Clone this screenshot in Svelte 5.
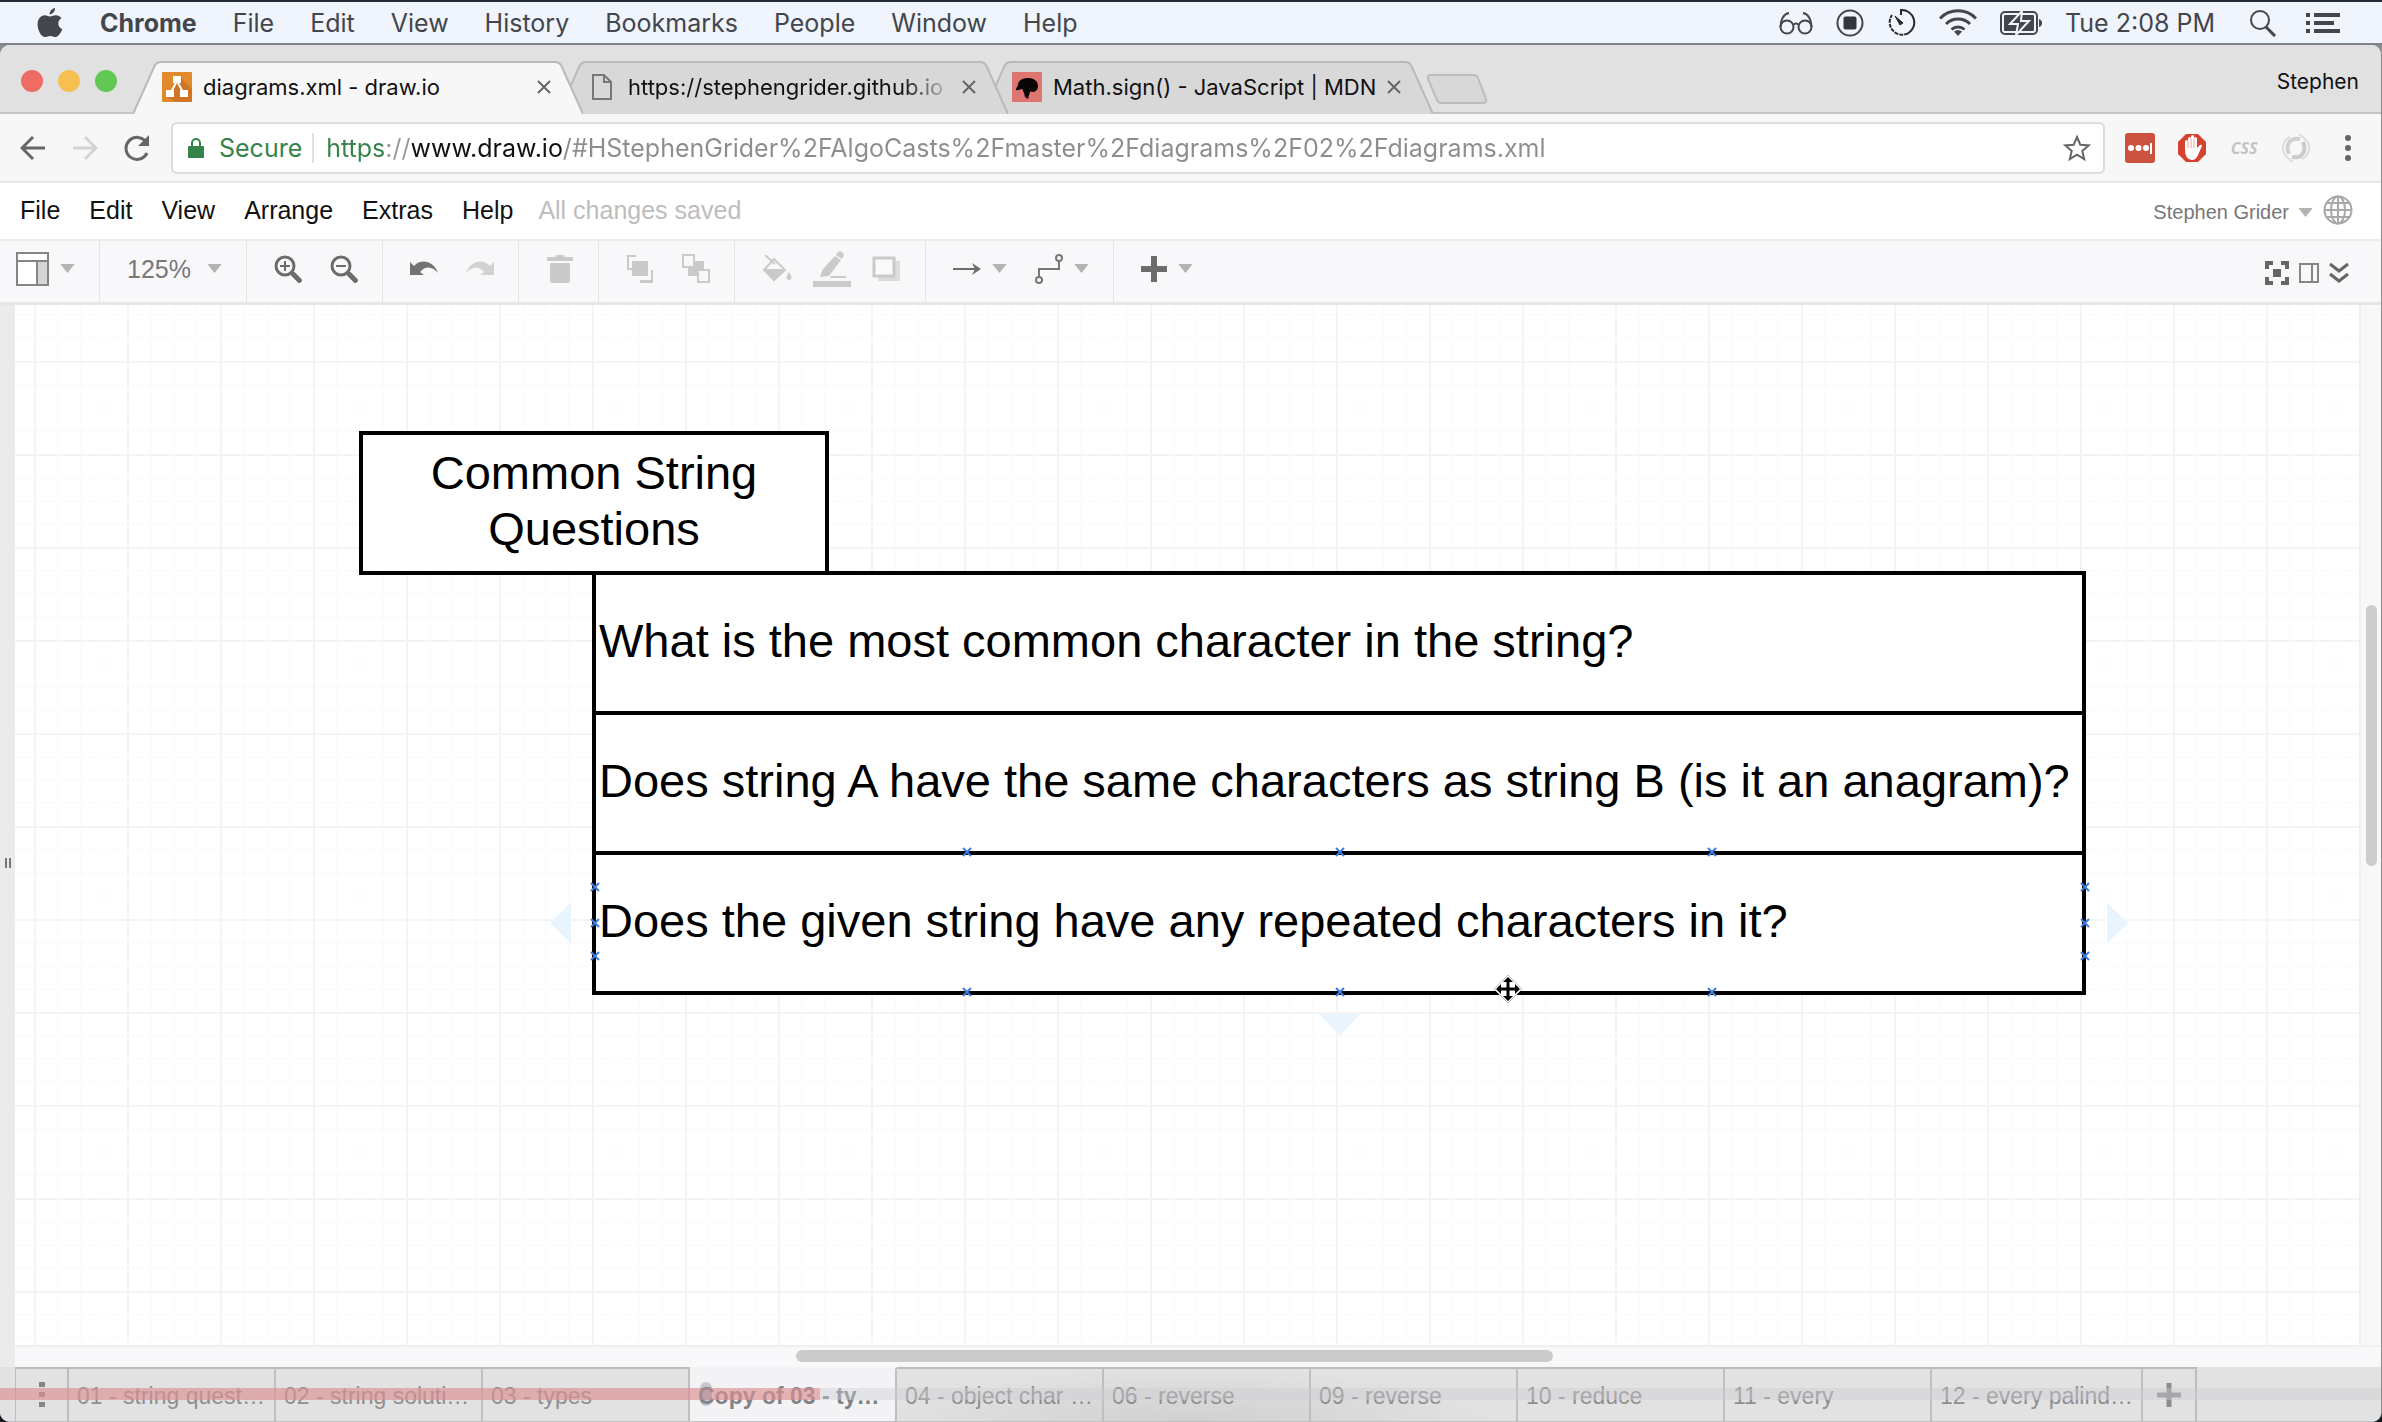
<script>
  const systemMenus = ['File', 'Edit', 'View', 'History', 'Bookmarks', 'People', 'Window', 'Help'];
  const appMenus = ['File', 'Edit', 'View', 'Arrange', 'Extras', 'Help'];
  const pages = [
    '01 - string quest…',
    '02 - string soluti…',
    '03 - types',
    'Copy of 03 - ty…',
    '04 - object char …',
    '06 - reverse',
    '09 - reverse',
    '10 - reduce',
    '11 - every',
    '12 - every palind…'
  ];
  const questions = [
    'What is the most common character in the string?',
    'Does string A have the same characters as string B (is it an anagram)?',
    'Does the given string have any repeated characters in it?'
  ];
  const anchors = [
    [952, 547], [1325, 547], [1697, 547],
    [952, 687], [1325, 687], [1697, 687],
    [580, 582], [580, 618], [580, 651],
    [2070, 582], [2070, 618], [2070, 651]
  ];
  let activePage = $state(3);
  let zoom = $state('125%');
  let address = $state('https://www.draw.io/#HStephenGrider%2FAlgoCasts%2Fmaster%2Fdiagrams%2F02%2Fdiagrams.xml');
</script>

{#snippet caret()}
  <svg class="caret" viewBox="0 0 16 10" aria-hidden="true"><path d="M0 0h16L8 10z" fill="#b3b3b3" /></svg>
{/snippet}

{#snippet tabShape(fill)}
  <svg class="tab-shape" viewBox="0 0 450 53" preserveAspectRatio="none" aria-hidden="true">
    <path d="M0 53 L22 4 Q24 1 28 1 H422 Q426 1 428 4 L450 53" {fill} stroke="#b9b9ba" stroke-width="2" />
  </svg>
{/snippet}

{#snippet close()}
  <button class="close" aria-label="Close tab">
    <svg width="14" height="14" viewBox="0 0 14 14"><path d="M1 1l12 12M13 1L1 13" stroke="#666" stroke-width="2" /></svg>
  </button>
{/snippet}

<div class="desktop">
  <header class="menubar">
    <svg width="26" height="30" viewBox="0 0 26 30" aria-label="Apple" role="img">
      <path fill="#43464c" d="M18 0c.3 3-2.300 6.300-5.300 6.500C12.300 3.500 15.200.6 18 0zM13 8.500c1.600 0 3-1.300 5.800-1.300 2.300 0 4.300 1.100 5.600 3-4.600 2.800-3.900 8.800.9 10.900-1.200 3.400-4 8-6.700 8-2 0-2.700-1.200-5.200-1.200s-3.300 1.200-5.200 1.200C4.300 29.100.6 22.400.6 16.500c0-5.700 3.300-9.300 7-9.300 2.500 0 3.900 1.300 5.400 1.300z" />
    </svg>
    <nav class="system-menus" aria-label="System">
      <button class="app-name">Chrome</button>
      {#each systemMenus as item}<button>{item}</button>{/each}
    </nav>
    <div class="status">
      <svg width="34" height="24" viewBox="0 0 34 24" fill="none" stroke="#43464c" stroke-width="2"><circle cx="8" cy="16" r="6.500" /><circle cx="26" cy="16" r="6.500" /><path d="M1.500 16C2 8 4 3 10 2M32.500 16C32 8 30 3 24 2M14 14q3-3 6 0" /></svg>
      <svg width="28" height="28" viewBox="0 0 28 28"><circle cx="14" cy="14" r="12.500" fill="none" stroke="#43464c" stroke-width="2" /><rect x="7.500" y="7.500" width="13" height="13" rx="2" fill="#33363c" /></svg>
      <svg width="29" height="29" viewBox="0 0 29 29" fill="none" stroke="#25282d" stroke-width="2"><path d="M14 7V2a12.500 12.500 0 0 1 7 23.300" /><path d="M21 25.300A12.500 12.500 0 0 1 5 7" stroke-dasharray="4 1" /><path d="M8 8l8 7-3 2z" fill="#25282d" stroke-width="1" /></svg>
      <svg width="38" height="28" viewBox="0 0 38 28" fill="none" stroke="#43464c" stroke-width="3"><path d="M1 9.500a25 25 0 0 1 36 0M7 15a17 17 0 0 1 24 0M12.500 20.500a9.500 9.500 0 0 1 13 0" /><path d="M19 27l-4-4.500q4-3 8 0z" fill="#43464c" stroke="none" /></svg>
      <svg width="42" height="24" viewBox="0 0 42 24"><rect x="1" y="1" width="36" height="22" rx="4" fill="none" stroke="#43464c" stroke-width="2" /><rect x="4" y="4" width="30" height="16" rx="1" fill="#43464c" /><path d="M39 8q3 1 3 4t-3 4z" fill="#43464c" /><path d="M22 0L10 13h8l-2 11 13-14h-8z" fill="#43464c" stroke="#f0f4fc" stroke-width="2" /></svg>
      <span>Tue 2:08 PM</span>
      <svg class="spotlight" width="28" height="28" viewBox="0 0 28 28" fill="none" stroke="#43464c"><circle cx="11" cy="11" r="9" stroke-width="2" /><path d="M17 18l9 9" stroke-width="3" /></svg>
      <svg width="34" height="20" viewBox="0 0 34 20" fill="#43464c"><path d="M0 0h4v4H0zM8 0h26v4H8zM0 8h4v4H0zM8 8h20v4H8zM0 16h4v4H0zM8 16h26v4H8z" /></svg>
    </div>
  </header>

  <div class="window">
    <div class="tab-strip">
      <div class="lights">
        <button class="light red" aria-label="Close window"></button>
        <button class="light yellow" aria-label="Minimize window"></button>
        <button class="light green" aria-label="Zoom window"></button>
      </div>
      <div class="tabs">
        <div class="tab current">
          {@render tabShape('#f7f7f8')}
          <svg width="30" height="30" viewBox="0 0 30 30"><rect width="30" height="30" rx="1" fill="#e08a2c" /><path d="M18 5l12 12v13H14L4 25z" fill="#cf7626" /><path d="M15 9l-7 13M15 9l7 13" stroke="#fff" stroke-width="2" /><path d="M11 4h8v7h-8zM4 18h8v7H4zM18 18h8v7h-8z" fill="#fff" /></svg>
          <span class="tab-title">diagrams.xml - draw.io</span>
          {@render close()}
        </div>
        <div class="tab second">
          {@render tabShape('#d8d8d9')}
          <svg width="20" height="26" viewBox="0 0 20 26" fill="none" stroke="#777" stroke-width="2"><path d="M1 1h11l7 7v17H1zM12 1v7h7" /></svg>
          <span class="tab-title faded">https://stephengrider.github.io</span>
          {@render close()}
        </div>
        <div class="tab">
          {@render tabShape('#d8d8d9')}
          <svg width="30" height="30" viewBox="0 0 30 30"><rect width="30" height="30" rx="1" fill="#de7571" /><path d="M4 18c0-3 2-3 2-6 1-4 5-6 10-6 6 0 10 3 10 8 0 3-2 6-5 6-1 0-2-1-3 0l-2 7-3-2-1-4c-1-2-1-3-2-4-2 0-4 2-6 1z" fill="#0a0606" /></svg>
          <span class="tab-title">Math.sign() - JavaScript | MDN</span>
          {@render close()}
        </div>
        <button class="new-tab" aria-label="New tab">
          <svg width="62" height="32" viewBox="0 0 62 32"><path d="M4 2h44q3 0 4 3l8 21q1 4-3 4H15q-3 0-4-3L2 6q-1-4 2-4z" fill="#d8d8d9" stroke="#bcbcbd" stroke-width="2" /></svg>
        </button>
      </div>
      <button class="profile">Stephen</button>
    </div>

    <div class="address-row">
      <div class="nav-buttons">
        <button aria-label="Back"><svg width="26" height="26" viewBox="0 0 26 26" fill="none" stroke="#666" stroke-width="3"><path d="M25 13H3M13 2L2 13l11 11" /></svg></button>
        <button aria-label="Forward"><svg width="26" height="26" viewBox="0 0 26 26" fill="none" stroke="#d4d4d5" stroke-width="3"><path d="M1 13h22M13 2l11 11-11 11" /></svg></button>
        <button aria-label="Reload"><svg width="26" height="26" viewBox="0 0 26 26"><path d="M23 18a11 11 0 1 1-1-11" fill="none" stroke="#666" stroke-width="3" /><path d="M25 0v11H14z" fill="#666" /></svg></button>
      </div>
      <div class="omnibox">
        <svg width="16" height="22" viewBox="0 0 16 22"><path d="M4 10V6a4 4 0 0 1 8 0v4" fill="none" stroke="#35834b" stroke-width="2" /><rect y="9" width="16" height="12" rx="1" fill="#35834b" /></svg>
        <span class="secure">Secure</span>
        <input class="url" type="text" aria-label="Address" bind:value={address} />
        <button aria-label="Bookmark"><svg width="28" height="28" viewBox="0 0 28 28"><path d="M14 3l3.300 7.700 8.300.7-6.300 5.500 1.900 8.200-7.200-4.400-7.200 4.400 1.900-8.200-6.300-5.500 8.300-.7z" fill="none" stroke="#666" stroke-width="2" /></svg></button>
      </div>
      <div class="extensions">
        <button aria-label="Password manager"><svg width="30" height="30" viewBox="0 0 30 30"><rect width="30" height="30" rx="3" fill="#cb5340" /><g fill="#fff"><circle cx="6" cy="15" r="3" /><circle cx="13.500" cy="15" r="3" /><circle cx="21" cy="15" r="3" /><path d="M25 10h2v11h-2z" /></g></svg></button>
        <button aria-label="Content blocker"><svg width="30" height="30" viewBox="0 0 30 30"><path d="M9 1h12l8 8v12l-8 8H9l-8-8V9z" fill="#d5432f" /><path d="M8 16V9q0-2 1.500-2T11 9V6q0-2 1.500-2T14 6V4q0-2 1.500-2T17 4v2q0-2 1.500-2T20 6v9l3-3q2-1 2 1l-4 9q-2 5-6 5-7 0-7-11z" fill="#fff" /><path d="M11 8v7M14 6v9M17 6v9" stroke="#e6a79d" stroke-width="1" /></svg></button>
        <button class="css-extension">CSS</button>
        <button aria-label="Inspector"><svg width="30" height="30" viewBox="0 0 30 30" fill="none"><path d="M19 6C9 4 4 12 8 21" stroke="#d0d0d1" stroke-width="4" /><path d="M11 24c10 2 15-6 11-15" stroke="#cbcbcc" stroke-width="4" /><path d="M9 4C1 8-1 18 6 24q3 3 6 5M21 26c8-4 10-14 3-20q-3-3-6-5" stroke="#dcdcdd" stroke-width="2" /></svg></button>
        <button aria-label="Browser menu"><svg width="6" height="26" viewBox="0 0 6 26" fill="#666"><circle cx="3" cy="3" r="3" /><circle cx="3" cy="13" r="3" /><circle cx="3" cy="23" r="3" /></svg></button>
      </div>
    </div>

    <div class="app-bar">
      <nav class="app-menus" aria-label="Editor">
        {#each appMenus as item}<button>{item}</button>{/each}
      </nav>
      <span class="saved">All changes saved</span>
      <button class="account">Stephen Grider {@render caret()}</button>
      <button aria-label="Language"><svg width="30" height="30" viewBox="0 0 30 30" fill="none" stroke="#a8a8a8" stroke-width="2"><circle cx="15" cy="15" r="13.500" /><ellipse cx="15" cy="15" rx="7" ry="13.500" /><path d="M15 1v28M1 15h28M4 8h22M4 22h22" /></svg></button>
    </div>

    <div class="toolbar">
      <div class="group first">
        <button class="with-caret" aria-label="View"><svg width="33" height="34" viewBox="0 0 33 34"><rect x="1" y="1" width="31" height="32" fill="#fff" stroke="#858585" stroke-width="2" /><path d="M22 10h9v22h-9z" fill="#d5d5d5" /><path d="M2 9h29M21 9v23" stroke="#858585" stroke-width="2" /></svg>{@render caret()}</button>
      </div>
      <div class="group">
        <label class="zoom"><select aria-label="Zoom" bind:value={zoom}><option>125%</option><option>100%</option></select>{@render caret()}</label>
      </div>
      <div class="group">
        <button aria-label="Zoom in"><svg width="28" height="28" viewBox="0 0 28 28" fill="none" stroke="#6c6c6c"><circle cx="11" cy="11" r="9" stroke-width="3" /><path d="M18 18l9 9" stroke-width="5" /><path d="M11 6v10M6 11h10" stroke-width="2" /></svg></button>
        <button aria-label="Zoom out"><svg width="28" height="28" viewBox="0 0 28 28" fill="none" stroke="#6c6c6c"><circle cx="11" cy="11" r="9" stroke-width="3" /><path d="M18 18l9 9" stroke-width="5" /><path d="M6 11h10" stroke-width="2" /></svg></button>
      </div>
      <div class="group">
        <button aria-label="Undo"><svg width="28" height="20" viewBox="0 0 28 20"><path d="M0 3l4 4C11-1 24 2 28 14c-5-6-12-8-18-1l4 3H0z" fill="#737373" /></svg></button>
        <button aria-label="Redo"><svg width="28" height="20" viewBox="0 0 28 20"><path d="M28 3l-4 4C17-1 4 2 0 14c5-6 12-8 18-1l-4 3h14z" fill="#d2d2d2" /></svg></button>
      </div>
      <div class="group">
        <button aria-label="Delete"><svg width="28" height="30" viewBox="0 0 28 30" fill="#cacaca"><path d="M1 3h8l2-2h6l2 2h8v4H1zM4 9h20v17q0 3-3 3H7q-3 0-3-3z" /></svg></button>
      </div>
      <div class="group">
        <button aria-label="To front"><svg width="28" height="30" viewBox="0 0 28 30"><path d="M10 2H2v13h4M20 27h6V16" fill="none" stroke="#cacaca" stroke-width="2" /><path d="M6 7h16v15H6zM14 26h13v3H14z" fill="#cacaca" /></svg></button>
        <button aria-label="To back"><svg width="28" height="30" viewBox="0 0 28 30"><path d="M6 7h16v15H6z" fill="#cacaca" /><rect x="1" y="1" width="11" height="12" fill="#f8f8fa" stroke="#cacaca" stroke-width="2" /><rect x="16" y="16" width="11" height="12" fill="#f8f8fa" stroke="#cacaca" stroke-width="2" /></svg></button>
      </div>
      <div class="group styles">
        <button aria-label="Fill color"><svg width="30" height="28" viewBox="0 0 30 28"><path d="M3 0l10 9M12 4L2 15l10 10 11-10z" fill="none" stroke="#cacaca" stroke-width="2" /><path d="M2 14h21L12 26z" fill="#cacaca" /><path d="M27 17q5 8 0 8t0-8z" fill="#cacaca" /></svg></button>
        <button aria-label="Line color"><svg width="38" height="36" viewBox="0 0 38 36" fill="#cacaca"><path d="M0 30h38v6H0zM22 5l6 4-12 16-9 1 3-8zM24 2q2-3 5-1t1 5l-1 2-6-4zM18 25h15v2H17z" /></svg></button>
        <button aria-label="Shadow"><svg width="29" height="26" viewBox="0 0 29 26"><path d="M6 5h22v20H6z" fill="#dcdcdc" /><rect x="2" y="2" width="20" height="18" fill="#fafafb" stroke="#cacaca" stroke-width="3" /></svg></button>
      </div>
      <div class="group">
        <button class="with-caret" aria-label="Connection"><svg width="28" height="12" viewBox="0 0 28 12"><path d="M0 6h23" stroke="#6c6c6c" stroke-width="2" /><path d="M19 0l9 6-9 6 3-6z" fill="#6c6c6c" /></svg>{@render caret()}</button>
        <button class="with-caret" aria-label="Waypoints"><svg width="28" height="30" viewBox="0 0 28 30" fill="none" stroke="#777" stroke-width="2"><path d="M4 23v-8h20V7" /><circle cx="4" cy="26" r="3" /><circle cx="24" cy="4" r="3" /></svg>{@render caret()}</button>
      </div>
      <div class="group last">
        <button class="with-caret" aria-label="Insert"><svg width="26" height="26" viewBox="0 0 26 26"><path d="M13 0v26M0 13h26" stroke="#6c6c6c" stroke-width="6" /></svg>{@render caret()}</button>
      </div>
      <div class="view-buttons">
        <button aria-label="Fullscreen"><svg width="24" height="24" viewBox="0 0 24 24"><path d="M2 8V2h6M16 2h6v6M22 16v6h-6M8 22H2v-6" fill="none" stroke="#666" stroke-width="4" /><path d="M8 8h8v8H8z" fill="#666" /></svg></button>
        <button aria-label="Format panel"><svg width="20" height="20" viewBox="0 0 20 20" fill="none" stroke="#858585" stroke-width="2"><path d="M1 1h18v18H1zM13 1v18" /></svg></button>
        <button aria-label="Collapse"><svg width="20" height="22" viewBox="0 0 20 22" fill="none" stroke="#666" stroke-width="3"><path d="M1 2l9 7 9-7M1 12l9 7 9-7" /></svg></button>
      </div>
    </div>

    <div class="workspace">
      <div class="splitter"><svg width="6" height="10" viewBox="0 0 6 10"><path d="M1 0v10M5 0v10" stroke="#777" stroke-width="2" /></svg></div>
      <main class="canvas">
        <svg class="grid" aria-hidden="true">
          <defs>
            <pattern id="grid" x="19" y="56" width="93" height="93" patternUnits="userSpaceOnUse">
              <path d="M24 0v93M47 0v93M70 0v93M0 24h93M0 47h93M0 70h93" stroke="#fcfcfc" stroke-width="2" />
              <path d="M1 0v93M0 1h93" stroke="#f4f4f4" stroke-width="2" />
            </pattern>
          </defs>
          <rect width="100%" height="100%" fill="url(#grid)" />
        </svg>
        <div class="heading">Common String Questions</div>
        <ul class="questions">
          {#each questions as question}<li>{question}</li>{/each}
        </ul>
        <svg class="handles" aria-hidden="true">
          <path d="M535 618l21-20v40zM2113 618l-21-20v40zM1304 709h41l-20 22z" fill="#e8f5fe" />
          {#each anchors as [x, y]}
            <path d="M{x - 4} {y - 4}l8 8M{x + 4} {y - 4}l-8 8" stroke="#3b7de0" stroke-width="2" />
          {/each}
          <g transform="translate(1493 684)">
            <path d="M0-14L14 0 0 14-14 0z" fill="#fff" stroke="#bbb" stroke-width="1" />
            <path d="M0-9V9M-9 0H9" stroke="#000" stroke-width="3" />
            <path d="M0-12l5 5H-5zM0 12l5-5H-5zM-12 0l5-5V5zM12 0L7-5V5z" />
          </g>
        </svg>
      </main>
      <div class="v-scroll"><div class="v-thumb"></div></div>
    </div>

    <div class="h-scroll"><div class="h-thumb"></div></div>

    <footer class="pages">
      <button class="page-menu" aria-label="Pages"><svg width="6" height="26" viewBox="0 0 6 26" fill="#858585"><path d="M0 0h6v5H0zM0 10h6v5H0zM0 20h6v5H0z" /></svg></button>
      {#each pages as page, i}
        <button class="page" class:active={i === activePage} onclick={() => (activePage = i)}>{page}</button>
      {/each}
      <button class="page-menu" aria-label="Add page"><svg width="24" height="24" viewBox="0 0 24 24"><path d="M12 0v24M0 12h24" stroke="#8e8e8e" stroke-width="5" /></svg></button>
      <div class="track"><div class="played"></div></div>
      <div class="knob"></div>
    </footer>
  </div>
</div>

<style>
  :global(body) { margin: 0; background: #16191d; }
  * { box-sizing: border-box; }
  button { display: flex; align-items: center; margin: 0; padding: 0; border: 0; background: none; color: inherit; font: inherit; white-space: nowrap; }
  svg { flex: none; display: block; }
  .desktop { display: flex; flex-direction: column; min-height: 100vh; border-top: 2px solid #262b34; background: linear-gradient(#8a9096 80px, #16191d 80px); font-family: Inter, "Liberation Sans", sans-serif; }
  .menubar { display: flex; align-items: center; height: 43px; padding: 0 42px 0 37px; background: #f0f4fc; border-bottom: 2px solid #7b838b; color: #43464c; font-size: 25px; }
  .system-menus { display: flex; gap: 36px; margin-left: 37px; }
  .app-name { font-weight: 700; }
  .status { display: flex; align-items: center; gap: 23px; margin-left: auto; white-space: nowrap; }
  .spotlight { margin: 0 6px 0 11px; }

  .window { display: flex; flex: 1; flex-direction: column; overflow: hidden; border-right: 1px solid #8b8b8c; border-radius: 10px; background: #f8f8fa; }
  .tab-strip { display: flex; align-items: flex-end; height: 69px; background: #e1e1e2; border-bottom: 2px solid #c3c3c4; }
  .lights { display: flex; gap: 15px; align-self: center; margin: 4px 16px 0 21px; }
  .light { width: 22px; height: 22px; border-radius: 50%; }
  .red { background: #ee6c62; }
  .yellow { background: #f5c04f; }
  .green { background: #62c855; }
  .tabs { display: flex; align-items: center; height: 53px; margin-bottom: -2px; }
  .tab { position: relative; display: flex; align-items: center; gap: 11px; width: 450px; height: 53px; margin-right: -25px; padding: 0 32px 2px 29px; font-size: 22px; color: #111; }
  .tab.current { z-index: 3; }
  .tab.second { z-index: 2; gap: 16px; padding-left: 34px; }
  .tab > * { position: relative; }
  .tab > :global(.tab-shape) { position: absolute; inset: 0; width: 100%; height: 100%; }
  .tab-title { flex: 1; overflow: hidden; white-space: nowrap; }
  .faded { margin-right: -8px; mask-image: linear-gradient(to right, #000 84%, transparent); }
  .close { flex: none; }
  .new-tab { margin: 2px 0 0 18px; }
  .profile { align-self: center; margin: 6px 22px 0 auto; font-size: 21px; color: #111; }

  .address-row { display: flex; align-items: center; height: 69px; padding: 0 30px 0 20px; background: #f7f7f8; border-bottom: 2px solid #e8e8e9; }
  .nav-buttons { display: flex; gap: 26px; margin-right: 21px; }
  .omnibox { display: flex; flex: 1; align-items: center; height: 52px; padding: 0 12px 0 15px; background: #fff; border: 2px solid #dcdcdd; border-radius: 6px; font-size: 25px; }
  .secure { margin-left: 15px; padding-right: 10px; border-right: 2px solid #e0e0e0; line-height: 30px; color: #35834b; }
  .url { flex: 1; min-width: 0; height: 40px; margin-left: 12px; padding: 0; border: 0; outline: 0; font: inherit; color: transparent; background: linear-gradient(to right, #35834b 61px, #999 61px, #999 86px, #111 86px, #111 236px, #8d8d8f 236px) text; }
  .extensions { display: flex; align-items: center; gap: 22px; margin-left: 20px; }
  .extensions button:last-child { margin-left: 12px; }
  .css-extension { width: 30px; justify-content: center; font: italic 700 16px "Open Sans", sans-serif; color: #c4c4c5; }

  .app-bar, .toolbar, .pages, .canvas { font-family: "Liberation Sans", Arial, sans-serif; }
  .app-bar { display: flex; align-items: center; height: 56px; padding: 0 28px 2px 20px; background: #fff; font-size: 25px; color: #111; }
  .app-menus { display: flex; gap: 29px; }
  .saved { margin-left: 25px; color: #bdbdbd; }
  .account { gap: 9px; margin: 4px 10px 0 auto; font-size: 20px; color: #777; }
  .caret { width: 15px; height: 9px; }

  .toolbar { display: flex; height: 66px; background: #f8f8fa; border-top: 2px solid #ececec; border-bottom: 3px solid #e6e6e6; }
  .group { display: flex; align-items: center; gap: 28px; padding: 0 24px 6px 27px; border-right: 1px solid #e4e4e4; }
  .group.first { padding-left: 16px; }
  .group.styles { gap: 21px; }
  .group.last { border: 0; }
  .with-caret { gap: 11px; }
  .zoom { display: flex; align-items: center; gap: 16px; }
  select { appearance: none; margin: 0; padding: 0; border: 0; background: none; font: 25px "Liberation Sans", Arial, sans-serif; color: #777; }
  .view-buttons { display: flex; align-items: center; gap: 10px; margin-left: auto; padding: 2px 32px 0 0; }

  .workspace { display: flex; flex: 1; min-height: 700px; }
  .splitter { display: flex; align-items: center; justify-content: center; width: 15px; padding-top: 76px; background: #ebebeb; }
  .canvas { position: relative; flex: 1; overflow: hidden; background: #fff; }
  .grid, .handles { position: absolute; inset: 0; width: 100%; height: 100%; }
  .heading { position: absolute; left: 344px; top: 126px; width: 470px; height: 144px; padding: 10px 60px; border: 4px solid #000; background: #fff; font-size: 47px; line-height: 56px; text-align: center; }
  .questions { position: absolute; left: 577px; top: 266px; width: 1494px; margin: 0; padding: 0; list-style: none; font-size: 47px; }
  .questions li { display: flex; align-items: center; height: 144px; margin-bottom: -4px; padding: 0 0 6px 3px; border: 4px solid #000; background: #fff; white-space: nowrap; }
  .v-scroll { width: 22px; padding: 300px 5px 0; border-left: 2px solid #f0f0f1; background: #f8f8fa; }
  .v-thumb { width: 11px; height: 261px; border-radius: 6px; background: #cdcdcd; }
  .h-scroll { height: 22px; padding: 3px 0; margin-left: 15px; border-top: 2px solid #f0f0f1; box-shadow: -15px 0 0 #ebebeb; }
  .h-thumb { width: 32%; height: 12px; margin-left: 33%; border-radius: 6px; background: #cbcbcb; }

  .pages { position: relative; display: flex; height: 55px; padding: 0 184px 0 15px; background: radial-gradient(ellipse 320px 60px at 1190px 60px, #cfcfcf, #e2e2e2); border-bottom: 1px solid #bfc3c3; font-size: 23px; color: #8f8f8f; }
  .page { flex: 1; padding: 2px 8px 0; border-top: 2px solid #bcbcbc; border-right: 2px solid #bfbfbf; }
  .page.active { border-top-color: #f3f3f5; background: #f3f3f5; font-weight: 700; color: #808285; }
  .page-menu { justify-content: center; width: 54px; border: 2px solid #bcbcbc; border-width: 2px 2px 0 0; }
  .page-menu:first-child { border-left-width: 1px; }
  .track { position: absolute; left: 0; right: 0; top: 21px; height: 12px; background: rgba(205, 205, 212, 0.4); }
  .played { width: 820px; height: 12px; background: rgba(229, 110, 110, 0.42); }
  .knob { position: absolute; left: 700px; top: 15px; width: 12px; height: 24px; border-radius: 6px; background: rgba(130, 136, 142, 0.4); }
</style>
